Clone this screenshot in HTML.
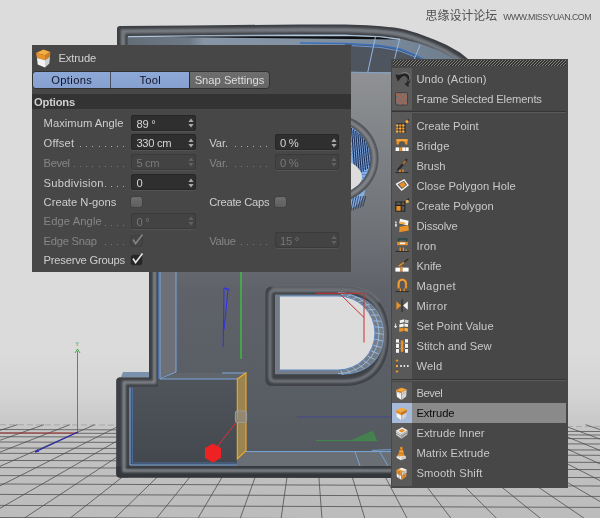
<!DOCTYPE html>
<html><head><meta charset="utf-8"><title>Extrude</title>
<style>
html,body{margin:0;padding:0}
body{width:600px;height:518px;overflow:hidden;position:relative;background:#dcdcdc;font-family:"Liberation Sans", sans-serif;font-size:11.2px}
i{display:block}
</style></head><body>
<svg width="600" height="518" viewBox="0 0 600 518" style="position:absolute;left:0;top:0">
<defs>
<linearGradient id="bg" x1="0" y1="0" x2="0" y2="518" gradientUnits="userSpaceOnUse">
<stop offset="0" stop-color="#dcdcdc"/><stop offset="0.68" stop-color="#dbdbdb"/><stop offset="0.76" stop-color="#d4d4d4"/><stop offset="0.818" stop-color="#c8c8c8"/><stop offset="0.86" stop-color="#c2c2c2"/><stop offset="1" stop-color="#bcbcbc"/>
</linearGradient>
<linearGradient id="face" x1="0" y1="72" x2="0" y2="470" gradientUnits="userSpaceOnUse">
<stop offset="0" stop-color="#8f9194"/><stop offset="0.2" stop-color="#7e8185"/><stop offset="0.42" stop-color="#6d7075"/><stop offset="0.55" stop-color="#5f6369"/><stop offset="0.85" stop-color="#585c63"/><stop offset="1" stop-color="#53575e"/>
</linearGradient>
<linearGradient id="topband" x1="117" y1="0" x2="480" y2="0" gradientUnits="userSpaceOnUse">
<stop offset="0" stop-color="#616b76"/><stop offset="0.2" stop-color="#6f7a87"/><stop offset="0.24" stop-color="#8796a6"/><stop offset="0.6" stop-color="#8191a2"/><stop offset="1" stop-color="#6b7a8b"/>
</linearGradient>
<linearGradient id="rimtop" x1="0" y1="24" x2="0" y2="36" gradientUnits="userSpaceOnUse">
<stop offset="0" stop-color="#3a3d42"/><stop offset="0.4" stop-color="#62666c"/><stop offset="0.8" stop-color="#43464b"/><stop offset="1" stop-color="#3a3d42"/>
</linearGradient>
<linearGradient id="frontg" x1="0" y1="379" x2="0" y2="466" gradientUnits="userSpaceOnUse"><stop offset="0" stop-color="#50545b"/><stop offset="1" stop-color="#43474e"/></linearGradient>
<filter id="b1" filterUnits="userSpaceOnUse" x="0" y="0" width="600" height="518"><feGaussianBlur stdDeviation="1.2"/></filter>
<filter id="b2" filterUnits="userSpaceOnUse" x="0" y="0" width="600" height="518"><feGaussianBlur stdDeviation="2.2"/></filter>
<clipPath id="gapclip"><rect x="345" y="80" width="55" height="200"/></clipPath>
<clipPath id="ringin"><ellipse cx="328" cy="158.5" rx="42.5" ry="37.5"/></clipPath>
<clipPath id="bclip"><path d="M117,29 Q117,26 120,26 L190,25.4 L300,24.5 L345,24.6 C365,25 385,26.2 400,28.5 C415,31.5 432,38.5 446.7,45 L460,52.5 L468,59 L540,150 L540,400 L480,470 L391,477.6 L120,477.6 Q116.4,477.6 116.4,474 L116.4,381 Q116.4,377.4 120,377.4 L149,377.4 L149,100 L117,100 Z"/></clipPath>
</defs>
<rect width="600" height="518" fill="url(#bg)"/>
<g stroke="#2c2c2c" stroke-width="0.75" opacity="0.8"><line x1="-330.0" y1="519" x2="-10.0" y2="424.7"/><line x1="-275.0" y1="519" x2="17.4" y2="424.7"/><line x1="-222.0" y1="519" x2="43.9" y2="424.7"/><line x1="-170.0" y1="519" x2="69.8" y2="424.7"/><line x1="-120.0" y1="519" x2="94.7" y2="424.7"/><line x1="-66.0" y1="519" x2="121.6" y2="424.7"/><line x1="-18.6" y1="519" x2="145.2" y2="424.7"/><line x1="23.0" y1="519" x2="166.0" y2="424.7"/><line x1="69.0" y1="519" x2="188.9" y2="424.7"/><line x1="114.0" y1="519" x2="211.3" y2="424.7"/><line x1="156.0" y1="519" x2="232.2" y2="424.7"/><line x1="197.5" y1="519" x2="252.9" y2="424.7"/><line x1="240.0" y1="519" x2="274.1" y2="424.7"/><line x1="281.0" y1="519" x2="294.5" y2="424.7"/><line x1="322.0" y1="519" x2="315.0" y2="424.7"/><line x1="365.0" y1="519" x2="336.4" y2="424.7"/><line x1="407.5" y1="519" x2="357.6" y2="424.7"/><line x1="451.5" y1="519" x2="379.5" y2="424.7"/><line x1="497.3" y1="519" x2="402.3" y2="424.7"/><line x1="541.3" y1="519" x2="424.3" y2="424.7"/><line x1="585.3" y1="519" x2="446.2" y2="424.7"/><line x1="630.0" y1="519" x2="468.5" y2="424.7"/><line x1="675.0" y1="519" x2="490.9" y2="424.7"/><line x1="721.0" y1="519" x2="513.8" y2="424.7"/><line x1="768.0" y1="519" x2="537.3" y2="424.7"/><line x1="816.0" y1="519" x2="561.2" y2="424.7"/><line x1="865.0" y1="519" x2="585.6" y2="424.7"/><line x1="915.0" y1="519" x2="610.5" y2="424.7"/><line x1="0" y1="429.5" x2="600" y2="431.5"/><line x1="0" y1="433" x2="600" y2="435"/><line x1="0" y1="436.7" x2="600" y2="438.7"/><line x1="0" y1="442" x2="600" y2="444"/><line x1="0" y1="448" x2="600" y2="450"/><line x1="0" y1="453.3" x2="600" y2="455.3"/><line x1="0" y1="460.4" x2="600" y2="462.4"/><line x1="0" y1="467.6" x2="600" y2="469.6"/><line x1="0" y1="475.6" x2="600" y2="477.6"/><line x1="0" y1="484" x2="600" y2="486"/><line x1="0" y1="494.4" x2="600" y2="496.4"/><line x1="0" y1="505.4" x2="600" y2="507.4"/><line x1="0" y1="517.5" x2="600" y2="519.5"/></g><line x1="0" y1="424.7" x2="600" y2="426.7" stroke="#444" stroke-width="0.7" stroke-dasharray="6 3" opacity="0.35"/>
<!-- world axis -->
<line x1="0" y1="433" x2="78" y2="433" stroke="#a82828" stroke-width="0.9"/>
<line x1="35" y1="452" x2="78" y2="432" stroke="#2525b0" stroke-width="1.1"/><path d="M35,452 l4,-0.6 M35,452 l3,-2.6" stroke="#2525b0" stroke-width="0.9"/>
<line x1="77.5" y1="351" x2="77.5" y2="432" stroke="#2a962a" stroke-width="0.9"/>
<path d="M75,353 L77.5,349 L80,353" stroke="#20a020" stroke-width="0.8" fill="none"/>
<text x="75.5" y="346" font-family='"Liberation Sans", sans-serif' font-size="5" fill="#2a962a">Y</text>

<!-- B outer silhouette (rim) -->
<path d="M117,29 Q117,26 120,26 L190,25.4 L300,24.5 L345,24.6 C365,25 385,26.2 400,28.5 C415,31.5 432,38.5 446.7,45 L460,52.5 L468,59 L540,150 L540,400 L480,470 L391,477.6 L120,477.6 Q116.4,477.6 116.4,474 L116.4,381 Q116.4,377.4 120,377.4 L149,377.4 L149,100 L117,100 Z" fill="#3c3f44"/>
<!-- rim highlight top -->
<path d="M123,50 L123,31.4 L190,30.8 L300,29.8 L345,30 C365,30.4 385,31.6 399,34 C414,37 430,44 444,50.5 L466,64" stroke="#777b81" stroke-width="4.4" fill="none" filter="url(#b1)"/>

<!-- top inner bevel band -->
<path d="M127.5,36 L190,35.2 L300,34.2 L345,34.6 L380,36 L400,38.5 L420,43.4 L440,51 L456,59.5 L456,80 L127.5,80 Z" fill="url(#topband)"/>
<path d="M128,36.6 L195,36 L345,35.4 L380,36.8 L400,39.4" stroke="#b9cde4" stroke-width="1.1" opacity="0.9"/>
<!-- dark slate top inner wall (gap) -->
<path d="M345,43.4 L380,45.5 L400,49 L415,55 L432,64 L432,73 L345,72 Z" fill="#4f555e"/>
<path d="M300,43 L345,43.4 L380,45.5 L400,49 L415,55 L432,64" stroke="#3a6fb8" stroke-width="1.5" fill="none"/>
<path d="M352,45.6 L380,47.4 L400,51 L415,57" stroke="#6f9fdc" stroke-width="0.9" fill="none"/>
<path d="M375.5,36 L374.8,40 L367.8,72 M399.5,39 L398.5,43.2 L394.5,59.4 M420,45 L414,60" stroke="#9cc0ee" stroke-width="0.9" fill="none"/>
<!-- face in the gap -->
<rect x="345" y="72" width="55" height="203" fill="url(#face)"/>
<path d="M345,72 L392,73" stroke="#7fa8d8" stroke-width="0.8"/>

<!-- below panel region: inner area inside rim -->
<rect x="159" y="270" width="240" height="196" fill="url(#face)"/>
<!-- shading: darker toward left wall bottom -->
<!-- left inner wall -->
<path d="M160,270 L176,270 L176,372 L160,379 Z" fill="#6d7177"/>
<path d="M160,270 L160,379 M176,270 L176,372 L160,379" stroke="#7fb0e6" stroke-width="0.9" fill="none"/>
<path d="M158.3,270 L158.3,379" stroke="#4f82c4" stroke-width="0.9" fill="none"/>
<!-- stem rim -->
<rect x="149" y="270" width="9" height="112" fill="#3c3f44"/>

<!-- lower-left block front face -->
<rect x="127" y="379" width="110.5" height="88" fill="url(#frontg)"/>
<!-- block top face -->
<path d="M160,379 L237,379 L246,373 L176,373 Z" fill="#60646b"/>
<path d="M160,379 L237,379" stroke="#7fb0e6" stroke-width="0.9"/>
<path d="M222,373 L246,373" stroke="#7fb0e6" stroke-width="0.9"/>
<!-- rim step horizontal -->
<path d="M116.4,381 Q116.4,377.4 120,377.4 L158,377.4 L158,386.6 L128.6,386.6 L128.6,477.6 L120,477.6 Q116.4,477.6 116.4,474 Z" fill="#3c3f44"/>

<path d="M123,372 L149,372 L149,377 L121,377 Z" fill="#7b92ad"/>
<!-- blue lines left block -->
<path d="M130,387.5 L130,465" stroke="#7fb0e6" stroke-width="1" fill="none"/><path d="M132.3,387.5 L132.3,463" stroke="#4a78b8" stroke-width="0.9" fill="none"/>
<path d="M130,465 L391,465" stroke="#7fb0e6" stroke-width="1"/>
<path d="M132,463 L237,463" stroke="#4a78b8" stroke-width="0.8"/>

<!-- recess floor right of orange -->
<path d="M246,451.6 L400,451.6 L400,466 L237,466 L237,460 Z" fill="#6a6e75"/>
<path d="M246,451.6 L392,451.6" stroke="#7fb0e6" stroke-width="0.9"/>
<path d="M355,452 L360,466 M380,452 L388,466 M372,450.4 L392,449.6" stroke="#7fb0e6" stroke-width="0.8" fill="none"/>
<!-- bottom rim -->
<path d="M116.4,466.4 L400,466.4 L400,478 L120,477.6 Q116.4,477.6 116.4,474 Z" fill="#33363a"/>
<path d="M154.6,268 L154.6,382.4 L124,382.4 L124,470.6 L400,470.6" stroke="#808489" stroke-width="3.4" fill="none" filter="url(#b1)"/>

<!-- orange selected poly -->
<path d="M237.3,379 L246,372.8 L246,450.7 L237.3,459 Z" fill="#9c8450" stroke="#f0ac28" stroke-width="1.1"/>
<!-- handle + red hex -->
<line x1="217" y1="447" x2="238" y2="420" stroke="#e03030" stroke-width="1"/>
<rect x="235.5" y="411" width="11" height="11.5" rx="2.5" fill="#8a8a88" fill-opacity="0.55" stroke="#9a9a9a" stroke-width="1.2"/>
<polygon points="213,443.5 221,448 221,458 213,462.5 205,458 205,448" fill="#ee2222"/>

<!-- green & blue axis -->
<line x1="241" y1="270" x2="241" y2="359" stroke="#38d038" stroke-width="1.2"/>
<path d="M224,288 L230,289.5 M224,288 L223.2,347 M224.5,288 L228,290 L224,330" stroke="#3030e8" stroke-width="1" fill="none"/>
<line x1="297" y1="417" x2="395" y2="417" stroke="#3a3ea8" stroke-width="0.8" opacity="0.8"/>
<path d="M316,440.6 L377.4,440.6" stroke="#3f9147" stroke-width="0.9"/>
<path d="M350,440.5 L373,430.5 L377,440.5 Z" fill="#3f9147" opacity="0.7"/>

<!-- lower hole -->
<path d="M272,286.5 H344 C374,286.5 389,306 389,336.2 C389,366.5 374,386 344,386 H272 Q265.5,386 265.5,380 V293 Q265.5,286.5 272,286.5 Z" fill="#3f4247"/>
<path d="M274.5,290.6 H344 C371,290.6 385,309 385,336 C385,363 371,381.2 344,381.2 H274.5 Q270,381.2 270,377 V295 Q270,290.6 274.5,290.6 Z" stroke="#74787e" stroke-width="3" fill="none" filter="url(#b1)"/>
<path d="M275,294.6 H341 C368,294.6 383.5,311 383.5,334.5 C383.5,358 368,374.2 341,374.2 H275 Z" fill="#747c88"/>
<path d="M279.5,296 H338 A37,37 0 0 1 338,370 H279.5 Z" fill="#dcdcdc"/>
<path d="M279.5,296 H338 A37,37 0 0 1 338,370 H279.5 Z" fill="none" stroke="#5d8cc8" stroke-width="1"/>
<path d="M272,288 H344 C360,288 372,293 379,302" stroke="#8a8d92" stroke-width="1.6" fill="none" filter="url(#b1)" opacity="0.9"/>
<!-- mesh ticks -->
<g stroke="#a8cdf2" stroke-width="0.7" fill="none">
<line x1="340.9" y1="295.6" x2="343.0" y2="294.1"/><line x1="347.1" y1="296.6" x2="350.3" y2="295.2"/><line x1="353.0" y1="298.6" x2="357.2" y2="297.4"/><line x1="358.4" y1="301.5" x2="363.7" y2="300.5"/><line x1="363.3" y1="305.4" x2="369.6" y2="304.6"/><line x1="367.6" y1="309.9" x2="374.6" y2="309.6"/><line x1="371.0" y1="315.1" x2="378.6" y2="315.2"/><line x1="373.5" y1="320.8" x2="381.6" y2="321.3"/><line x1="375.0" y1="326.8" x2="383.4" y2="327.8"/><line x1="375.5" y1="333.0" x2="384.0" y2="334.5"/><line x1="375.0" y1="339.2" x2="383.4" y2="341.2"/><line x1="373.5" y1="345.2" x2="381.6" y2="347.7"/><line x1="371.0" y1="350.9" x2="378.6" y2="353.8"/><line x1="367.6" y1="356.1" x2="374.6" y2="359.4"/><line x1="363.3" y1="360.6" x2="369.6" y2="364.4"/><line x1="358.4" y1="364.5" x2="363.7" y2="368.5"/><line x1="353.0" y1="367.4" x2="357.2" y2="371.6"/><line x1="347.1" y1="369.4" x2="350.3" y2="373.8"/><line x1="340.9" y1="370.4" x2="343.0" y2="374.9"/><path d="M338,292.5 A41,40.5 0 0 1 338,373.5" /><path d="M341,294.6 C368,294.6 383.5,311 383.5,334.5 C383.5,358 368,374.2 341,374.2" stroke="#7fb0e6"/>
</g>
<!-- red lines -->
<path d="M316,293.3 L364,293.3 L364,342.5 M341,295 L364,317.5" stroke="#c83030" stroke-width="1" fill="none"/>

<!-- upper hole ring (gap) -->
<g clip-path="url(#gapclip)">
<ellipse cx="332" cy="190" rx="33" ry="23" fill="#86aee2"/>
<g stroke="#1e3560" stroke-width="0.8"><line x1="349.0" y1="196" x2="346.0" y2="213.0"/><line x1="351.4" y1="196" x2="348.4" y2="212.1"/><line x1="353.8" y1="196" x2="350.8" y2="211.2"/><line x1="356.2" y1="196" x2="353.2" y2="210.3"/><line x1="358.6" y1="196" x2="355.6" y2="209.4"/><line x1="361.0" y1="196" x2="358.0" y2="208.5"/><line x1="363.4" y1="196" x2="360.4" y2="207.6"/><line x1="365.8" y1="196" x2="362.8" y2="206.7"/></g>
<ellipse cx="328" cy="158.5" rx="50.5" ry="45.5" fill="#4e5156"/>
<ellipse cx="328" cy="158.5" rx="46.3" ry="41.3" fill="none" stroke="#85888c" stroke-width="3.6" filter="url(#b1)"/>
<ellipse cx="328" cy="158.5" rx="42.5" ry="37.5" fill="#86aee2"/>
<g clip-path="url(#ringin)"><line x1="332.5" y1="146.3" x2="335.6" y2="120.6" stroke="#4f7fc4" stroke-width="0.8"/><line x1="334.9" y1="146.7" x2="339.6" y2="121.4" stroke="#4f7fc4" stroke-width="0.8"/><line x1="337.3" y1="147.3" x2="343.6" y2="122.6" stroke="#4f7fc4" stroke-width="0.8"/><line x1="339.6" y1="148.1" x2="347.4" y2="124.0" stroke="#4f7fc4" stroke-width="0.8"/><line x1="341.8" y1="149.0" x2="351.1" y2="125.9" stroke="#4f7fc4" stroke-width="0.8"/><line x1="343.8" y1="150.1" x2="354.5" y2="128.0" stroke="#4f7fc4" stroke-width="0.8"/><line x1="345.7" y1="151.4" x2="357.7" y2="130.3" stroke="#4f7fc4" stroke-width="0.8"/><line x1="347.5" y1="152.7" x2="360.6" y2="133.0" stroke="#4f7fc4" stroke-width="0.8"/><line x1="349.0" y1="154.2" x2="363.2" y2="135.9" stroke="#4f7fc4" stroke-width="0.8"/><line x1="350.4" y1="155.8" x2="365.5" y2="139.0" stroke="#4f7fc4" stroke-width="0.8"/><line x1="351.6" y1="157.5" x2="367.4" y2="142.2" stroke="#4f7fc4" stroke-width="0.8"/><line x1="352.5" y1="159.3" x2="369.0" y2="145.6" stroke="#4f7fc4" stroke-width="0.8"/><line x1="353.2" y1="161.2" x2="370.2" y2="149.2" stroke="#4f7fc4" stroke-width="0.8"/><line x1="353.7" y1="163.0" x2="371.0" y2="152.8" stroke="#4f7fc4" stroke-width="0.8"/><line x1="354.0" y1="165.0" x2="371.4" y2="156.5" stroke="#4f7fc4" stroke-width="0.8"/><line x1="354.0" y1="166.9" x2="371.5" y2="160.2" stroke="#4f7fc4" stroke-width="0.8"/><line x1="353.7" y1="168.8" x2="371.1" y2="163.9" stroke="#4f7fc4" stroke-width="0.8"/><line x1="353.3" y1="170.7" x2="370.3" y2="167.5" stroke="#4f7fc4" stroke-width="0.8"/><line x1="352.6" y1="172.5" x2="369.1" y2="171.0" stroke="#4f7fc4" stroke-width="0.8"/><line x1="351.7" y1="174.3" x2="367.6" y2="174.5" stroke="#4f7fc4" stroke-width="0.8"/><line x1="350.5" y1="176.0" x2="365.7" y2="177.8" stroke="#4f7fc4" stroke-width="0.8"/><line x1="349.2" y1="177.6" x2="363.4" y2="180.9" stroke="#4f7fc4" stroke-width="0.8"/><line x1="347.6" y1="179.1" x2="360.8" y2="183.8" stroke="#4f7fc4" stroke-width="0.8"/><line x1="345.9" y1="180.5" x2="357.9" y2="186.4" stroke="#4f7fc4" stroke-width="0.8"/><line x1="344.0" y1="181.8" x2="354.8" y2="188.8" stroke="#4f7fc4" stroke-width="0.8"/><line x1="342.0" y1="182.9" x2="351.4" y2="191.0" stroke="#4f7fc4" stroke-width="0.8"/><line x1="339.8" y1="183.8" x2="347.7" y2="192.8" stroke="#4f7fc4" stroke-width="0.8"/><line x1="337.5" y1="184.6" x2="343.9" y2="194.3" stroke="#4f7fc4" stroke-width="0.8"/><line x1="335.2" y1="185.2" x2="340.0" y2="195.5" stroke="#4f7fc4" stroke-width="0.8"/><line x1="332.7" y1="185.7" x2="335.9" y2="196.4" stroke="#4f7fc4" stroke-width="0.8"/><line x1="351.5" y1="128.0" x2="355.0" y2="176.0" stroke="#1c2f58" stroke-width="1.1"/><line x1="353.6" y1="129.5" x2="357.1" y2="174.8" stroke="#1c2f58" stroke-width="1.1"/><line x1="355.7" y1="131.0" x2="359.2" y2="173.6" stroke="#1c2f58" stroke-width="1.1"/><line x1="357.8" y1="132.5" x2="361.3" y2="172.4" stroke="#1c2f58" stroke-width="1.1"/><line x1="359.9" y1="134.0" x2="363.4" y2="171.2" stroke="#1c2f58" stroke-width="1.1"/><line x1="362.0" y1="135.5" x2="365.5" y2="170.0" stroke="#1c2f58" stroke-width="1.1"/><line x1="364.1" y1="137.0" x2="367.6" y2="168.8" stroke="#1c2f58" stroke-width="1.1"/><line x1="366.2" y1="138.5" x2="369.7" y2="167.6" stroke="#1c2f58" stroke-width="1.1"/><line x1="368.3" y1="140.0" x2="371.8" y2="166.4" stroke="#1c2f58" stroke-width="1.1"/></g>
<ellipse cx="330" cy="177" rx="32" ry="19" fill="#dcdcdc" clip-path="url(#ringin)"/>
</g>
</svg>
<div style="position:absolute;left:0;top:0;width:600px;height:518px;will-change:transform">
<div style="position:absolute;left:32px;top:45px;width:319px;height:227px;background:#474747"></div><svg width="600" height="100" viewBox="0 0 600 100" style="position:absolute;left:0;top:0"><polygon points="36,53 43.5,49.4 50.4,52 45,55.2" fill="#f5ad42"/><polygon points="36,53 45,55.2 45,60.2 37,58" fill="#e8922a"/><polygon points="45,55.2 50.4,52 50,56.6 45,60.2" fill="#cf7f22"/><polygon points="37,58 45,60.2 45,67.6 37.7,64.6" fill="#f4f4f4"/><polygon points="45,60.2 50,56.6 49.4,63.6 45,67.6" fill="#d0d0d0"/></svg><div style="position:absolute;left:58.5px;top:50px;height:16px;line-height:16px;color:#d2d2d2;white-space:nowrap"><span style="letter-spacing:-0.143px">Extrude</span></div><div style="position:absolute;left:33px;top:72.2px;width:77.5px;height:15.8px;line-height:16px;background:linear-gradient(#8da9d8,#86a0d0);color:#10142a;text-align:center;border-radius:3px 0 0 3px;white-space:nowrap;box-shadow:0 0 0 0.7px #2c2c2c"><span style="letter-spacing:0.348px">Options</span></div><div style="position:absolute;left:111.2px;top:72.2px;width:78px;height:15.8px;line-height:16px;background:linear-gradient(#8da9d8,#86a0d0);color:#10142a;text-align:center;border-radius:0;white-space:nowrap;box-shadow:0 0 0 0.7px #2c2c2c"><span style="letter-spacing:0.267px">Tool</span></div><div style="position:absolute;left:190px;top:72.2px;width:79px;height:15.8px;line-height:16px;background:linear-gradient(#6e6e6e,#666);color:#dedede;text-align:center;border-radius:0 3px 3px 0;white-space:nowrap;box-shadow:0 0 0 0.7px #2c2c2c"><span style="letter-spacing:0.002px">Snap Settings</span></div><div style="position:absolute;left:32px;top:94px;width:319px;height:15px;background:#333333"></div><div style="position:absolute;left:34px;top:95px;height:15px;line-height:15px;color:#cfcfcf;font-weight:bold;white-space:nowrap"><span style="letter-spacing:-0.181px">Options</span></div><div style="position:absolute;left:43.6px;top:115px;height:16px;line-height:16px;color:#cecece;white-space:nowrap"><span style="letter-spacing:0.031px">Maximum Angle</span></div><div style="position:absolute;left:131px;top:114.5px;width:65px;height:16px;background:#2f2f2f;border-radius:3px;box-shadow:0 0 0 1px #262626 inset, 0 1px 0 #555;color:#d4d4d4;line-height:15px"><span style="position:absolute;left:5.5px;top:2px;letter-spacing:-0.3px">89 °</span><svg width="6" height="10" viewBox="0 0 6 10" style="position:absolute;right:2.4px;top:3.3px"><path d="M3,0.4 L5.6,4 H0.4 Z M3,9.6 L5.6,6 H0.4 Z" fill="#a9a9a9"/></svg></div><div style="position:absolute;left:43.6px;top:134.8px;height:16px;line-height:16px;color:#cecece;white-space:nowrap"><span style="letter-spacing:0.16px">Offset</span></div><i style="position:absolute;left:123.3px;top:146.0px;width:1.2px;height:1.2px;background:#cecece;opacity:0.75"></i><i style="position:absolute;left:117.1px;top:146.0px;width:1.2px;height:1.2px;background:#cecece;opacity:0.75"></i><i style="position:absolute;left:110.9px;top:146.0px;width:1.2px;height:1.2px;background:#cecece;opacity:0.75"></i><i style="position:absolute;left:104.7px;top:146.0px;width:1.2px;height:1.2px;background:#cecece;opacity:0.75"></i><i style="position:absolute;left:98.5px;top:146.0px;width:1.2px;height:1.2px;background:#cecece;opacity:0.75"></i><i style="position:absolute;left:92.3px;top:146.0px;width:1.2px;height:1.2px;background:#cecece;opacity:0.75"></i><i style="position:absolute;left:86.1px;top:146.0px;width:1.2px;height:1.2px;background:#cecece;opacity:0.75"></i><i style="position:absolute;left:79.9px;top:146.0px;width:1.2px;height:1.2px;background:#cecece;opacity:0.75"></i><div style="position:absolute;left:131px;top:134.3px;width:65px;height:16px;background:#2f2f2f;border-radius:3px;box-shadow:0 0 0 1px #262626 inset, 0 1px 0 #555;color:#d4d4d4;line-height:15px"><span style="position:absolute;left:5.5px;top:2px;letter-spacing:-0.348px">330 cm</span><svg width="6" height="10" viewBox="0 0 6 10" style="position:absolute;right:2.4px;top:3.3px"><path d="M3,0.4 L5.6,4 H0.4 Z M3,9.6 L5.6,6 H0.4 Z" fill="#a9a9a9"/></svg></div><div style="position:absolute;left:43.6px;top:154.6px;height:16px;line-height:16px;color:#868686;white-space:nowrap"><span style="letter-spacing:-0.38px">Bevel</span></div><i style="position:absolute;left:123.3px;top:165.79999999999998px;width:1.2px;height:1.2px;background:#868686;opacity:0.75"></i><i style="position:absolute;left:117.1px;top:165.79999999999998px;width:1.2px;height:1.2px;background:#868686;opacity:0.75"></i><i style="position:absolute;left:110.9px;top:165.79999999999998px;width:1.2px;height:1.2px;background:#868686;opacity:0.75"></i><i style="position:absolute;left:104.7px;top:165.79999999999998px;width:1.2px;height:1.2px;background:#868686;opacity:0.75"></i><i style="position:absolute;left:98.5px;top:165.79999999999998px;width:1.2px;height:1.2px;background:#868686;opacity:0.75"></i><i style="position:absolute;left:92.3px;top:165.79999999999998px;width:1.2px;height:1.2px;background:#868686;opacity:0.75"></i><i style="position:absolute;left:86.1px;top:165.79999999999998px;width:1.2px;height:1.2px;background:#868686;opacity:0.75"></i><i style="position:absolute;left:79.9px;top:165.79999999999998px;width:1.2px;height:1.2px;background:#868686;opacity:0.75"></i><i style="position:absolute;left:73.7px;top:165.79999999999998px;width:1.2px;height:1.2px;background:#868686;opacity:0.75"></i><div style="position:absolute;left:131px;top:154.1px;width:65px;height:16px;background:#434343;border-radius:3px;box-shadow:0 0 0 1px #3a3a3a inset, 0 1px 0 #555;color:#787878;line-height:15px"><span style="position:absolute;left:5.5px;top:2px;letter-spacing:-0.412px">5 cm</span><svg width="6" height="10" viewBox="0 0 6 10" style="position:absolute;right:2.4px;top:3.3px"><path d="M3,0.4 L5.6,4 H0.4 Z M3,9.6 L5.6,6 H0.4 Z" fill="#626262"/></svg></div><div style="position:absolute;left:43.6px;top:174.8px;height:16px;line-height:16px;color:#cecece;white-space:nowrap"><span style="letter-spacing:0.271px">Subdivision</span></div><i style="position:absolute;left:123.3px;top:186.0px;width:1.2px;height:1.2px;background:#cecece;opacity:0.75"></i><i style="position:absolute;left:117.1px;top:186.0px;width:1.2px;height:1.2px;background:#cecece;opacity:0.75"></i><i style="position:absolute;left:110.9px;top:186.0px;width:1.2px;height:1.2px;background:#cecece;opacity:0.75"></i><i style="position:absolute;left:104.7px;top:186.0px;width:1.2px;height:1.2px;background:#cecece;opacity:0.75"></i><div style="position:absolute;left:131px;top:174.3px;width:65px;height:16px;background:#2f2f2f;border-radius:3px;box-shadow:0 0 0 1px #262626 inset, 0 1px 0 #555;color:#d4d4d4;line-height:15px"><span style="position:absolute;left:5.5px;top:2px;letter-spacing:-0.3px">0</span><svg width="6" height="10" viewBox="0 0 6 10" style="position:absolute;right:2.4px;top:3.3px"><path d="M3,0.4 L5.6,4 H0.4 Z M3,9.6 L5.6,6 H0.4 Z" fill="#a9a9a9"/></svg></div><div style="position:absolute;left:43.6px;top:193.8px;height:16px;line-height:16px;color:#cecece;white-space:nowrap"><span style="letter-spacing:0.003px">Create N-gons</span></div><div style="position:absolute;left:131.3px;top:196.8px;width:10.5px;height:10px;border-radius:2.5px;background:linear-gradient(#6e6e6e,#5f5f5f);box-shadow:0 0 0 0.6px #3c3c3c"></div><div style="position:absolute;left:43.6px;top:213.4px;height:16px;line-height:16px;color:#868686;white-space:nowrap"><span style="letter-spacing:0.097px">Edge Angle</span></div><i style="position:absolute;left:123.3px;top:224.6px;width:1.2px;height:1.2px;background:#868686;opacity:0.75"></i><i style="position:absolute;left:117.1px;top:224.6px;width:1.2px;height:1.2px;background:#868686;opacity:0.75"></i><i style="position:absolute;left:110.9px;top:224.6px;width:1.2px;height:1.2px;background:#868686;opacity:0.75"></i><i style="position:absolute;left:104.7px;top:224.6px;width:1.2px;height:1.2px;background:#868686;opacity:0.75"></i><div style="position:absolute;left:131px;top:212.9px;width:65px;height:16px;background:#434343;border-radius:3px;box-shadow:0 0 0 1px #3a3a3a inset, 0 1px 0 #555;color:#787878;line-height:15px"><span style="position:absolute;left:5.5px;top:2px;letter-spacing:-0.3px">0 °</span><svg width="6" height="10" viewBox="0 0 6 10" style="position:absolute;right:2.4px;top:3.3px"><path d="M3,0.4 L5.6,4 H0.4 Z M3,9.6 L5.6,6 H0.4 Z" fill="#626262"/></svg></div><div style="position:absolute;left:43.6px;top:232.6px;height:16px;line-height:16px;color:#868686;white-space:nowrap"><span style="letter-spacing:-0.242px">Edge Snap</span></div><i style="position:absolute;left:123.3px;top:243.79999999999998px;width:1.2px;height:1.2px;background:#868686;opacity:0.75"></i><i style="position:absolute;left:117.1px;top:243.79999999999998px;width:1.2px;height:1.2px;background:#868686;opacity:0.75"></i><i style="position:absolute;left:110.9px;top:243.79999999999998px;width:1.2px;height:1.2px;background:#868686;opacity:0.75"></i><i style="position:absolute;left:104.7px;top:243.79999999999998px;width:1.2px;height:1.2px;background:#868686;opacity:0.75"></i><div style="position:absolute;left:131.3px;top:235.6px;width:10.5px;height:10px;border-radius:2.5px;background:#454545;box-shadow:0 0 0 0.6px #3a3a3a"></div><svg width="14" height="13" viewBox="0 0 14 13" style="position:absolute;left:130.8px;top:232.6px"><path d="M2,6.5 L4.6,10.5 L11.5,1.5" stroke="#858585" stroke-width="1.6" fill="none"/></svg><div style="position:absolute;left:43.6px;top:252.2px;height:16px;line-height:16px;color:#cecece;white-space:nowrap"><span style="letter-spacing:-0.218px">Preserve Groups</span></div><div style="position:absolute;left:131.3px;top:255.2px;width:10.5px;height:10px;border-radius:2.5px;background:#262626;box-shadow:0 0 0 0.6px #3a3a3a"></div><svg width="14" height="13" viewBox="0 0 14 13" style="position:absolute;left:130.8px;top:252.2px"><path d="M2,6.5 L4.6,10.5 L11.5,1.5" stroke="#e6e6e6" stroke-width="1.6" fill="none"/></svg><div style="position:absolute;left:209.2px;top:134.8px;height:16px;line-height:16px;color:#cecece;white-space:nowrap"><span style="letter-spacing:-0.02px">Var.</span></div><i style="position:absolute;left:265.7px;top:146.0px;width:1.2px;height:1.2px;background:#cecece;opacity:0.75"></i><i style="position:absolute;left:259.5px;top:146.0px;width:1.2px;height:1.2px;background:#cecece;opacity:0.75"></i><i style="position:absolute;left:253.3px;top:146.0px;width:1.2px;height:1.2px;background:#cecece;opacity:0.75"></i><i style="position:absolute;left:247.1px;top:146.0px;width:1.2px;height:1.2px;background:#cecece;opacity:0.75"></i><i style="position:absolute;left:240.9px;top:146.0px;width:1.2px;height:1.2px;background:#cecece;opacity:0.75"></i><i style="position:absolute;left:234.7px;top:146.0px;width:1.2px;height:1.2px;background:#cecece;opacity:0.75"></i><div style="position:absolute;left:274.5px;top:134.3px;width:64.5px;height:16px;background:#2f2f2f;border-radius:3px;box-shadow:0 0 0 1px #262626 inset, 0 1px 0 #555;color:#d4d4d4;line-height:15px"><span style="position:absolute;left:5.5px;top:2px;letter-spacing:-0.3px">0 %</span><svg width="6" height="10" viewBox="0 0 6 10" style="position:absolute;right:2.4px;top:3.3px"><path d="M3,0.4 L5.6,4 H0.4 Z M3,9.6 L5.6,6 H0.4 Z" fill="#a9a9a9"/></svg></div><div style="position:absolute;left:209.2px;top:154.6px;height:16px;line-height:16px;color:#868686;white-space:nowrap"><span style="letter-spacing:-0.02px">Var.</span></div><i style="position:absolute;left:265.7px;top:165.79999999999998px;width:1.2px;height:1.2px;background:#868686;opacity:0.75"></i><i style="position:absolute;left:259.5px;top:165.79999999999998px;width:1.2px;height:1.2px;background:#868686;opacity:0.75"></i><i style="position:absolute;left:253.3px;top:165.79999999999998px;width:1.2px;height:1.2px;background:#868686;opacity:0.75"></i><i style="position:absolute;left:247.1px;top:165.79999999999998px;width:1.2px;height:1.2px;background:#868686;opacity:0.75"></i><i style="position:absolute;left:240.9px;top:165.79999999999998px;width:1.2px;height:1.2px;background:#868686;opacity:0.75"></i><i style="position:absolute;left:234.7px;top:165.79999999999998px;width:1.2px;height:1.2px;background:#868686;opacity:0.75"></i><div style="position:absolute;left:274.5px;top:154.1px;width:64.5px;height:16px;background:#434343;border-radius:3px;box-shadow:0 0 0 1px #3a3a3a inset, 0 1px 0 #555;color:#787878;line-height:15px"><span style="position:absolute;left:5.5px;top:2px;letter-spacing:-0.3px">0 %</span><svg width="6" height="10" viewBox="0 0 6 10" style="position:absolute;right:2.4px;top:3.3px"><path d="M3,0.4 L5.6,4 H0.4 Z M3,9.6 L5.6,6 H0.4 Z" fill="#626262"/></svg></div><div style="position:absolute;left:209.2px;top:193.8px;height:16px;line-height:16px;color:#cecece;white-space:nowrap"><span style="letter-spacing:-0.237px">Create Caps</span></div><div style="position:absolute;left:275.2px;top:196.8px;width:10.5px;height:10px;border-radius:2.5px;background:linear-gradient(#6e6e6e,#5f5f5f);box-shadow:0 0 0 0.6px #3c3c3c"></div><div style="position:absolute;left:209.2px;top:232.6px;height:16px;line-height:16px;color:#868686;white-space:nowrap"><span style="letter-spacing:-0.239px">Value</span></div><i style="position:absolute;left:265.7px;top:243.79999999999998px;width:1.2px;height:1.2px;background:#868686;opacity:0.75"></i><i style="position:absolute;left:259.5px;top:243.79999999999998px;width:1.2px;height:1.2px;background:#868686;opacity:0.75"></i><i style="position:absolute;left:253.3px;top:243.79999999999998px;width:1.2px;height:1.2px;background:#868686;opacity:0.75"></i><i style="position:absolute;left:247.1px;top:243.79999999999998px;width:1.2px;height:1.2px;background:#868686;opacity:0.75"></i><i style="position:absolute;left:240.9px;top:243.79999999999998px;width:1.2px;height:1.2px;background:#868686;opacity:0.75"></i><div style="position:absolute;left:274.5px;top:232.1px;width:64.5px;height:16px;background:#434343;border-radius:3px;box-shadow:0 0 0 1px #3a3a3a inset, 0 1px 0 #555;color:#787878;line-height:15px"><span style="position:absolute;left:5.5px;top:2px;letter-spacing:-0.3px">15 °</span><svg width="6" height="10" viewBox="0 0 6 10" style="position:absolute;right:2.4px;top:3.3px"><path d="M3,0.4 L5.6,4 H0.4 Z M3,9.6 L5.6,6 H0.4 Z" fill="#626262"/></svg></div>
<div style="position:absolute;left:391px;top:59.2px;width:176.6px;height:429px;background:#474747"></div><div style="position:absolute;left:392px;top:68px;width:19.5px;height:41.5px;background:#5b5b5b"></div><div style="position:absolute;left:392px;top:113px;width:19.5px;height:265.5px;background:#595959"></div><div style="position:absolute;left:392px;top:382px;width:19.5px;height:103.5px;background:#595959"></div><div style="position:absolute;left:392.5px;top:60.2px;width:173px;height:6px;background:repeating-linear-gradient(135deg,#343434 0 1.06px,#82827a 1.06px 2.12px)"></div><div style="position:absolute;left:392px;top:110.5px;width:174px;height:1px;background:#363636"></div><div style="position:absolute;left:392px;top:111.5px;width:174px;height:1px;background:#5a5a5a"></div><div style="position:absolute;left:392px;top:379.4px;width:174px;height:1px;background:#363636"></div><div style="position:absolute;left:392px;top:380.4px;width:174px;height:1px;background:#5a5a5a"></div><div style="position:absolute;left:392px;top:402.5px;width:173.5px;height:20px;background:#8a8a8a"></div><div style="position:absolute;left:392px;top:402.5px;width:19.5px;height:20px;background:#a6b9d8"></div><div style="position:absolute;left:416.4px;top:71px;height:16px;line-height:16px;color:#c9c9c9;white-space:nowrap"><span style="letter-spacing:0.146px">Undo (Action)</span></div><div style="position:absolute;left:416.4px;top:91px;height:16px;line-height:16px;color:#c9c9c9;white-space:nowrap"><span style="letter-spacing:-0.144px">Frame Selected Elements</span></div><div style="position:absolute;left:416.4px;top:118px;height:16px;line-height:16px;color:#c9c9c9;white-space:nowrap"><span style="letter-spacing:0.001px">Create Point</span></div><div style="position:absolute;left:416.4px;top:138px;height:16px;line-height:16px;color:#c9c9c9;white-space:nowrap"><span style="letter-spacing:0.126px">Bridge</span></div><div style="position:absolute;left:416.4px;top:158px;height:16px;line-height:16px;color:#c9c9c9;white-space:nowrap"><span style="letter-spacing:-0.027px">Brush</span></div><div style="position:absolute;left:416.4px;top:178px;height:16px;line-height:16px;color:#c9c9c9;white-space:nowrap"><span style="letter-spacing:0.063px">Close Polygon Hole</span></div><div style="position:absolute;left:416.4px;top:198px;height:16px;line-height:16px;color:#c9c9c9;white-space:nowrap"><span style="letter-spacing:0.012px">Create Polygon</span></div><div style="position:absolute;left:416.4px;top:218px;height:16px;line-height:16px;color:#c9c9c9;white-space:nowrap"><span style="letter-spacing:-0.135px">Dissolve</span></div><div style="position:absolute;left:416.4px;top:238px;height:16px;line-height:16px;color:#c9c9c9;white-space:nowrap"><span style="letter-spacing:0.205px">Iron</span></div><div style="position:absolute;left:416.4px;top:258px;height:16px;line-height:16px;color:#c9c9c9;white-space:nowrap"><span style="letter-spacing:-0.08px">Knife</span></div><div style="position:absolute;left:416.4px;top:278px;height:16px;line-height:16px;color:#c9c9c9;white-space:nowrap"><span style="letter-spacing:0.379px">Magnet</span></div><div style="position:absolute;left:416.4px;top:298px;height:16px;line-height:16px;color:#c9c9c9;white-space:nowrap"><span style="letter-spacing:0.314px">Mirror</span></div><div style="position:absolute;left:416.4px;top:318px;height:16px;line-height:16px;color:#c9c9c9;white-space:nowrap"><span style="letter-spacing:0.067px">Set Point Value</span></div><div style="position:absolute;left:416.4px;top:338px;height:16px;line-height:16px;color:#c9c9c9;white-space:nowrap"><span style="letter-spacing:0.047px">Stitch and Sew</span></div><div style="position:absolute;left:416.4px;top:358px;height:16px;line-height:16px;color:#c9c9c9;white-space:nowrap"><span style="letter-spacing:0.201px">Weld</span></div><div style="position:absolute;left:416.4px;top:385px;height:16px;line-height:16px;color:#c9c9c9;white-space:nowrap"><span style="letter-spacing:-0.38px">Bevel</span></div><div style="position:absolute;left:416.4px;top:404.5px;height:16px;line-height:16px;color:#0c0c0c;white-space:nowrap"><span style="letter-spacing:-0.066px">Extrude</span></div><div style="position:absolute;left:416.4px;top:425px;height:16px;line-height:16px;color:#c9c9c9;white-space:nowrap"><span style="letter-spacing:0.079px">Extrude Inner</span></div><div style="position:absolute;left:416.4px;top:445px;height:16px;line-height:16px;color:#c9c9c9;white-space:nowrap"><span style="letter-spacing:0.084px">Matrix Extrude</span></div><div style="position:absolute;left:416.4px;top:465px;height:16px;line-height:16px;color:#c9c9c9;white-space:nowrap"><span style="letter-spacing:0.178px">Smooth Shift</span></div><svg width="18" height="18" viewBox="0 0 18 18" style="position:absolute;left:392.5px;top:70px;overflow:visible"><path d="M14.2,13.6 A5,5 0 1 0 6.6,7.4" stroke="#232323" stroke-width="2.6" fill="none"/><path d="M2.4,4.6 L10,5.4 L4.8,11.4 Z" fill="#232323"/><path d="M12.2,13.4 L15.6,16" stroke="#232323" stroke-width="1.8"/><path d="M15.4,11.4 A5,5 0 0 0 8,4" stroke="#8e8e8e" stroke-width="0.8" fill="none"/></svg><svg width="18" height="18" viewBox="0 0 18 18" style="position:absolute;left:392.5px;top:90px;overflow:visible"><rect x="2.6" y="2.6" width="12" height="12.4" rx="1.2" fill="#77706c" stroke="#3a3a3a" stroke-width="0.9"/><rect x="3.4" y="3.4" width="2.5" height="2.6" fill="#ac6452"/><rect x="3.4" y="9.0" width="2.5" height="2.6" fill="#ac6452"/><rect x="6.1" y="6.2" width="2.5" height="2.6" fill="#ac6452"/><rect x="6.1" y="11.8" width="2.5" height="2.6" fill="#ac6452"/><rect x="8.8" y="3.4" width="2.5" height="2.6" fill="#ac6452"/><rect x="8.8" y="9.0" width="2.5" height="2.6" fill="#ac6452"/><rect x="11.5" y="6.2" width="2.5" height="2.6" fill="#ac6452"/><rect x="11.5" y="11.8" width="2.5" height="2.6" fill="#ac6452"/></svg><svg width="18" height="18" viewBox="0 0 18 18" style="position:absolute;left:392.5px;top:117px;overflow:visible"><path d="M3,7 H12 V16 M3,10 H12 M3,13 H12 M6,7 V16 M9,7 V16 M12,7 L15,3" stroke="#242424" stroke-width="1" fill="none"/><circle cx="4.2" cy="8.5" r="1.25" fill="#f6aa3c"/><circle cx="4.2" cy="11.5" r="1.25" fill="#e8902a"/><circle cx="4.2" cy="14.5" r="1.25" fill="#f6aa3c"/><circle cx="7.2" cy="8.5" r="1.25" fill="#e8902a"/><circle cx="7.2" cy="11.5" r="1.25" fill="#f6aa3c"/><circle cx="7.2" cy="14.5" r="1.25" fill="#e8902a"/><circle cx="10.2" cy="8.5" r="1.25" fill="#f6aa3c"/><circle cx="10.2" cy="11.5" r="1.25" fill="#e8902a"/><circle cx="10.2" cy="14.5" r="1.25" fill="#f6aa3c"/><path d="M15.8,1.5 L15.8,5 L12.5,5 Z" fill="#242424"/><circle cx="14" cy="4.6" r="1.6" fill="#f6aa3c"/></svg><svg width="18" height="18" viewBox="0 0 18 18" style="position:absolute;left:392.5px;top:137px;overflow:visible"><path d="M3.5,2.2 H14.5 V7.6 H12.2 A3.2,3.4 0 0 0 5.8,7.6 H3.5 Z" fill="#e8902a"/><path d="M3.5,2.2 H14.5 V4 H3.5Z" fill="#f6aa3c"/><rect x="2.6" y="10.4" width="3.4" height="3.6" fill="#ffffff"/><rect x="6.3" y="10.4" width="2.4" height="3.6" fill="#e8902a"/><rect x="9" y="10.4" width="3" height="3.6" fill="#ffffff"/><rect x="12.3" y="10.4" width="0.1" height="3.6" fill="#e8902a"/><rect x="12.4" y="10.4" width="3.2" height="3.6" fill="#ffffff"/><rect x="8.6" y="10.4" width="0.8" height="3.6" fill="#e8902a"/></svg><svg width="18" height="18" viewBox="0 0 18 18" style="position:absolute;left:392.5px;top:157px;overflow:visible"><path d="M14.5,1.8 L12,2.5 L5.5,10.5 L7.5,12 L14,4.2 Z" fill="#2b2b30"/><path d="M11.8,3 L9,6.4 L10.8,7.8 L13.4,4.6Z" fill="#a0703a"/><path d="M5.5,10.5 L3.5,14 L7.5,12Z" fill="#1e1e1e"/><path d="M2.5,15.6 H15.5" stroke="#242424" stroke-width="0.9"/><path d="M7,12.6 V15.2 M10,12.6 V15.2" stroke="#e8902a" stroke-width="1.3"/></svg><svg width="18" height="18" viewBox="0 0 18 18" style="position:absolute;left:392.5px;top:177px;overflow:visible"><g transform="translate(9,8.4) scale(0.86) translate(-9,-9)"><polygon points="2.6,7.5 11.5,2.6 16,8.6 8.6,14.4" fill="none" stroke="#f4f4f4" stroke-width="1.5"/><polygon points="5.6,7.8 11,4.8 13.6,8.4 9,12" fill="#e8902a"/></g></svg><svg width="18" height="18" viewBox="0 0 18 18" style="position:absolute;left:392.5px;top:197px;overflow:visible"><rect x="2.8" y="8.4" width="5.4" height="5.8" fill="#e8902a"/><path d="M2.8,5 H11.8 V14.2 H2.8 Z M8.2,5 V14.2 M2.8,8.4 H11.8 M11.8,5 L15,2.2" stroke="#242424" stroke-width="1.1" fill="none"/><rect x="9" y="5.8" width="2.2" height="2" fill="#7a5a30"/><path d="M16,0.8 V4.6 H12.6 Z" fill="#242424"/><circle cx="14.2" cy="4.4" r="1.7" fill="#e8b860"/></svg><svg width="18" height="18" viewBox="0 0 18 18" style="position:absolute;left:392.5px;top:217px;overflow:visible"><polygon points="7,1.8 15.6,3.8 14.8,8.4 6.2,6.2" fill="#f4f4f4"/><polygon points="7.4,4.6 12.5,5.8 12.2,7.6 7,6.4" fill="#f6aa3c"/><polygon points="6.6,9.8 15.4,8.2 15.8,13.6 6.2,15.2" fill="#e8902a"/><rect x="2.2" y="6.5" width="1.5" height="3.2" fill="#f4f4f4"/><circle cx="2.9" cy="5.2" r="0.9" fill="#d2d2d2"/></svg><svg width="18" height="18" viewBox="0 0 18 18" style="position:absolute;left:392.5px;top:237px;overflow:visible"><path d="M5.6,4.8 V2 H13.6 V4.8" stroke="#274848" stroke-width="1.6" fill="none"/><rect x="4.2" y="4.8" width="10.6" height="3.4" fill="#e8902a"/><rect x="7" y="5.6" width="5" height="1.6" fill="#f4f4f4"/><path d="M2.5,14.4 H16" stroke="#242424" stroke-width="0.9"/><path d="M7.2,10.6 V14 M10.4,10.6 V14 M13,12.4 V14" stroke="#e8902a" stroke-width="1.3"/></svg><svg width="18" height="18" viewBox="0 0 18 18" style="position:absolute;left:392.5px;top:257px;overflow:visible"><path d="M15.5,1.8 L5.5,9.4" stroke="#3a2a1a" stroke-width="1.3"/><path d="M11,5.4 L5.5,9.4" stroke="#e8902a" stroke-width="1.3"/><rect x="2.4" y="10.6" width="5" height="4" fill="#ffffff"/><rect x="7.4" y="9.6" width="2.2" height="5" fill="#e8902a"/><rect x="9.6" y="10.6" width="6" height="4" fill="#ffffff"/></svg><svg width="18" height="18" viewBox="0 0 18 18" style="position:absolute;left:392.5px;top:277px;overflow:visible"><path d="M5.6,11.6 V6.6 A3.7,3.9 0 0 1 13,6.6 V11.6" stroke="#e8902a" stroke-width="2.3" fill="none"/><path d="M5.6,9.5 V6.6 A3.7,3.9 0 0 1 13,6.6" stroke="#f6aa3c" stroke-width="0.8" fill="none"/><path d="M2.5,14.6 H16" stroke="#242424" stroke-width="0.9"/><path d="M7.4,11.6 V14.2 M11.2,11.6 V14.2" stroke="#e8902a" stroke-width="1.2"/></svg><svg width="18" height="18" viewBox="0 0 18 18" style="position:absolute;left:392.5px;top:297px;overflow:visible"><polygon points="3.4,4.4 8.2,8.6 3.4,12.8" fill="#e8902a"/><polygon points="14.8,4.4 10,8.6 14.8,12.8" fill="#f4f4f4"/><path d="M9.1,2.4 V15" stroke="#242424" stroke-width="1"/></svg><svg width="18" height="18" viewBox="0 0 18 18" style="position:absolute;left:392.5px;top:317px;overflow:visible"><polygon points="6.6,3.4 10.8,2.2 11.2,5 7,6.2" fill="#f4f4f4"/><polygon points="11.6,2.4 15.6,3.2 15.2,6.2 11.6,5.4" fill="#d2d2d2"/><polygon points="6.2,7.4 10.6,6.6 10.8,9.4 6.4,10.4" fill="#f4f4f4"/><polygon points="11.4,6.6 15.2,7.2 14.8,10 11.4,9.4" fill="#f4f4f4"/><polygon points="6,11.6 10.4,10.6 10.8,14 6.4,15" fill="#e8902a"/><polygon points="11.2,10.8 15.2,11.4 14.8,14.8 11.4,14" fill="#f6aa3c"/><path d="M2.6,6.6 V10.4 M1.4,9 L2.6,10.8 L3.8,9" stroke="#f4f4f4" stroke-width="0.9" fill="none"/></svg><svg width="18" height="18" viewBox="0 0 18 18" style="position:absolute;left:392.5px;top:337px;overflow:visible"><rect x="3" y="2.2" width="3" height="13.6" fill="#f4f4f4"/><rect x="12" y="2.2" width="3" height="13.6" fill="#f4f4f4"/><rect x="7.8" y="3.4" width="2.6" height="11.4" fill="#e8902a"/><path d="M3,6.2 H6 M3,11.4 H6 M12,6.2 H15 M12,11.4 H15" stroke="#3a3a3a" stroke-width="1"/><path d="M6,6.2 H7.8 M6,11.4 H7.8 M10.4,6.2 H12 M10.4,11.4 H12" stroke="#9a9a9a" stroke-width="0.8"/></svg><svg width="18" height="18" viewBox="0 0 18 18" style="position:absolute;left:392.5px;top:357px;overflow:visible"><path d="M4,3.6 V14.4 M4,9 H15" stroke="#3a3a3a" stroke-width="0.8" stroke-dasharray="1.5 1.2"/><circle cx="4" cy="3.6" r="1.2" fill="#e8902a"/><circle cx="4" cy="9" r="1.2" fill="#f6aa3c"/><circle cx="4" cy="14.4" r="1.2" fill="#e8902a"/><circle cx="8" cy="9" r="1" fill="#f4f4f4"/><circle cx="11.4" cy="9" r="1" fill="#f4f4f4"/><circle cx="14.8" cy="9" r="1" fill="#f4f4f4"/></svg><svg width="18" height="18" viewBox="0 0 18 18" style="position:absolute;left:392.5px;top:384px;overflow:visible"><g transform="translate(8.4,9.3) scale(0.86) translate(-9,-9)"><polygon points="3.00,5.20 9.20,7.60 9.20,10.36 3.24,7.60" fill="#f4f4f4"/><polygon points="9.20,7.60 15.20,4.80 15.02,7.14 9.20,10.36" fill="#d2d2d2"/><polygon points="3.24,7.60 9.20,10.36 9.20,16.80 3.80,13.20" fill="#f4f4f4"/><polygon points="9.20,10.36 15.02,7.14 14.60,12.60 9.20,16.80" fill="#d2d2d2"/><polygon points="3.00,5.20 9.30,2.60 15.20,4.80 9.20,7.60" fill="#f6aa3c"/><path d="M9.2,7.6 L9.2,16.8" stroke="#6a5a48" stroke-width="0.5" opacity="0.6"/><polygon points="3,5.2 9.3,2.6 15.2,4.8 9.2,7.6" fill="#e8902a"/><polygon points="4.6,5.3 9.3,3.4 13.6,5 9.2,7" fill="#f6aa3c"/><polygon points="3,5.2 9.2,7.6 9.2,9 3.3,6.8" fill="#c8781c"/></g></svg><svg width="18" height="18" viewBox="0 0 18 18" style="position:absolute;left:392.5px;top:403.5px;overflow:visible"><g transform="translate(8.4,9.3) scale(0.88) translate(-9,-9)"><polygon points="3.00,5.20 9.20,7.60 9.20,11.46 3.34,8.56" fill="#e8902a"/><polygon points="9.20,7.60 15.20,4.80 14.95,8.08 9.20,11.46" fill="#c8781c"/><polygon points="3.34,8.56 9.20,11.46 9.20,16.80 3.80,13.20" fill="#f4f4f4"/><polygon points="9.20,11.46 14.95,8.08 14.60,12.60 9.20,16.80" fill="#d2d2d2"/><polygon points="3.00,5.20 9.30,2.60 15.20,4.80 9.20,7.60" fill="#f6aa3c"/><path d="M9.2,7.6 L9.2,16.8" stroke="#6a5a48" stroke-width="0.5" opacity="0.6"/></g></svg><svg width="18" height="18" viewBox="0 0 18 18" style="position:absolute;left:392.5px;top:424px;overflow:visible"><g transform="translate(8.6,9) scale(0.88) translate(-9,-9)"><polygon points="2.4,6.4 9.6,2.4 16,6 8.8,10.4" fill="#f4f4f4"/><polygon points="5.4,6.4 9.6,4.1 13.2,6.1 9,8.6" fill="#e8902a"/><polygon points="2.4,6.4 8.8,10.4 8.8,15.6 2.8,11.4" fill="#d2d2d2"/><polygon points="8.8,10.4 16,6 15.6,11 8.8,15.6" fill="#b8b8b8"/><path d="M2.6,9 L8.8,13 L15.8,8.6" stroke="#6a6a6a" stroke-width="0.7" fill="none"/></g></svg><svg width="18" height="18" viewBox="0 0 18 18" style="position:absolute;left:392.5px;top:444px;overflow:visible"><g transform="translate(8.4,9.4) scale(0.86) translate(-9,-9)"><polygon points="3.4,12 9.4,10.4 14.4,12.4 8.6,14.6" fill="#f4f4f4"/><polygon points="3.4,12 8.6,14.6 8.6,17 3.6,14.4" fill="#f4f4f4"/><polygon points="8.6,14.6 14.4,12.4 14.2,14.8 8.6,17" fill="#d2d2d2"/><polygon points="5.2,8.4 11.6,8 12.6,12.4 5.6,12.6" fill="#e8902a"/><polygon points="6.6,5 10.8,4.6 11.6,8.6 6.4,9" fill="#f6aa3c"/><polygon points="7.6,1.6 10,1.4 10.6,5 7.4,5.2" fill="#e8902a"/><path d="M5.4,8.6 H11.8 M6.6,5 H10.9" stroke="#8a4a10" stroke-width="0.6"/></g></svg><svg width="18" height="18" viewBox="0 0 18 18" style="position:absolute;left:392.5px;top:464px;overflow:visible"><g transform="translate(8.4,9.3) scale(0.86) translate(-9,-9)"><polygon points="3.00,5.20 9.20,7.60 9.20,12.20 3.40,9.20" fill="#e8902a"/><polygon points="9.20,7.60 15.20,4.80 14.90,8.70 9.20,12.20" fill="#d2d2d2"/><polygon points="3.40,9.20 9.20,12.20 9.20,16.80 3.80,13.20" fill="#f4f4f4"/><polygon points="9.20,12.20 14.90,8.70 14.60,12.60 9.20,16.80" fill="#e8902a"/><polygon points="3.00,5.20 9.30,2.60 15.20,4.80 9.20,7.60" fill="#f6aa3c"/><path d="M9.2,7.6 L9.2,16.8" stroke="#6a5a48" stroke-width="0.5" opacity="0.6"/><polygon points="9.3,2.6 15.2,4.8 12.2,6.2 6.2,3.9" fill="#f4f4f4"/><path d="M6.1,6.4 L6.5,15 M12.2,6.2 L11.9,14.7" stroke="#7a5a38" stroke-width="0.5"/></g></svg>
<div style="position:absolute;left:425.5px;top:8.3px;height:16px;line-height:16px;font-size:12px;color:#505050;white-space:nowrap;font-family:'Liberation Sans','Noto Sans CJK SC',sans-serif;letter-spacing:-0.05px">思缘设计论坛</div><div id="wm2" style="position:absolute;left:503.2px;top:11.2px;height:12px;line-height:12px;font-size:8.8px;color:#505050;white-space:nowrap;letter-spacing:-0.5px;transform-origin:0 50%">WWW.MISSYUAN.COM</div>
</div>
</body></html>
